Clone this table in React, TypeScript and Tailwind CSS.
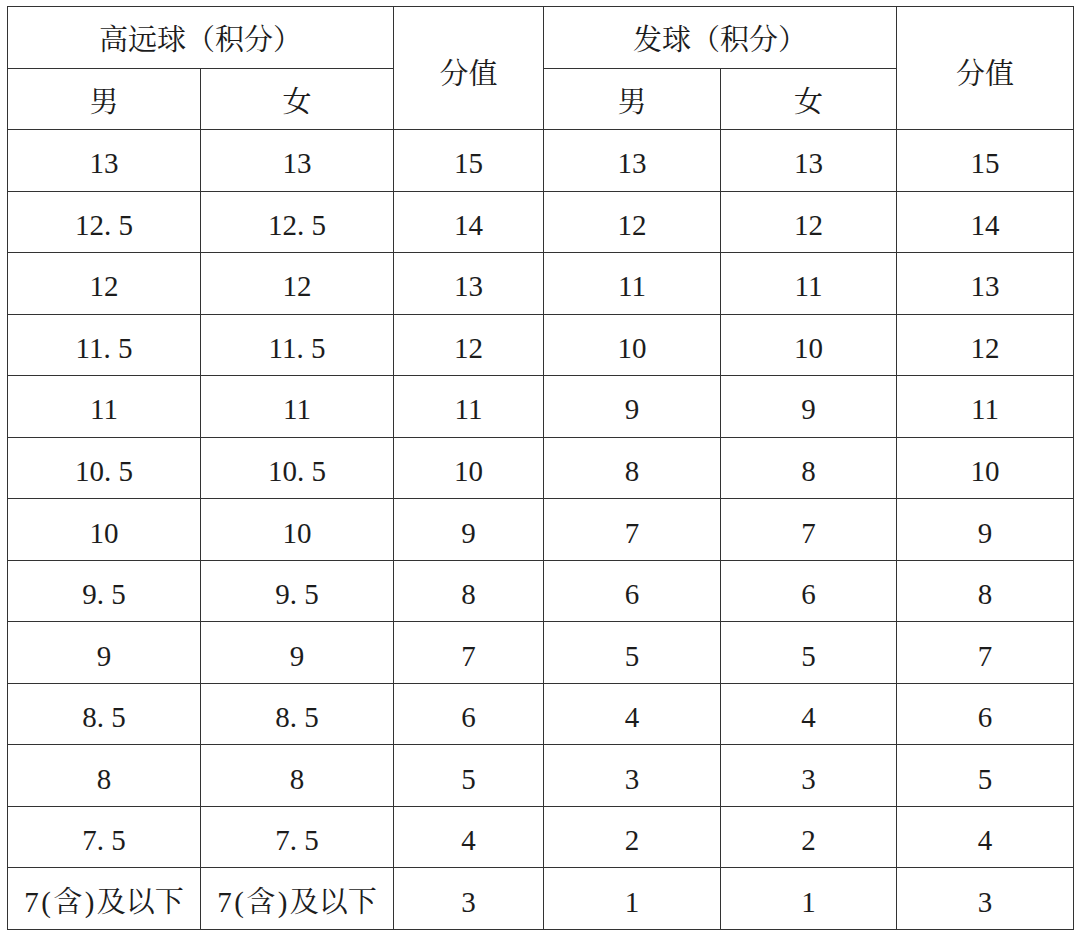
import React from "react";

const rows: [string, string, string, string, string, string][] = [
  ["13", "13", "15", "13", "13", "15"],
  ["12.5", "12.5", "14", "12", "12", "14"],
  ["12", "12", "13", "11", "11", "13"],
  ["11.5", "11.5", "12", "10", "10", "12"],
  ["11", "11", "11", "9", "9", "11"],
  ["10.5", "10.5", "10", "8", "8", "10"],
  ["10", "10", "9", "7", "7", "9"],
  ["9.5", "9.5", "8", "6", "6", "8"],
  ["9", "9", "7", "5", "5", "7"],
  ["8.5", "8.5", "6", "4", "4", "6"],
  ["8", "8", "5", "3", "3", "5"],
  ["7.5", "7.5", "4", "2", "2", "4"],
  ["7(含)及以下", "7(含)及以下", "3", "1", "1", "3"],
];

function Val({ v }: { v: string }) {
  if (v.includes("(")) {
    return (
      <>
        7<span className="inline-block w-[0.5em] text-center">(</span>
        <span className="text-[29px]">含</span>
        <span className="inline-block w-[0.5em] text-center">)</span>
        <span className="text-[29px]">及以下</span>
      </>
    );
  }
  const i = v.indexOf(".");
  if (i < 0) return <>{v}</>;
  return (
    <>
      {v.slice(0, i)}
      <span className="inline-block w-[0.5em] text-left">.</span>
      {v.slice(i + 1)}
    </>
  );
}

const cell = "border-[1.5px] border-[#333] text-center align-middle p-0 pt-[7px]";
const cjk = "text-[29px]";

export default function App() {
  return (
    <div className="bg-white w-[1080px] h-[937px] pt-[6px] pl-[7px]">
      <table
        className="table-fixed border-collapse w-[1066px] h-[924px] text-[#1c1c1c] text-[29px] leading-none"
        style={{ fontFamily: '"Liberation Serif", "Noto Serif CJK SC", "Noto Sans CJK SC", serif' }}
      >
        <colgroup>
          <col className="w-[193px]" />
          <col className="w-[193px]" />
          <col className="w-[150px]" />
          <col className="w-[177px]" />
          <col className="w-[176px]" />
          <col className="w-[177px]" />
        </colgroup>
        <tbody>
          <tr className="h-[61.5px]">
            <td colSpan={2} className={cell + " " + cjk}>高远球（积分）</td>
            <td rowSpan={2} className={cell + " " + cjk + " pt-[12px]"}>分值</td>
            <td colSpan={2} className={cell + " " + cjk}>发球（积分）</td>
            <td rowSpan={2} className={cell + " " + cjk + " pt-[12px]"}>分值</td>
          </tr>
          <tr className="h-[61.5px]">
            <td className={cell + " " + cjk}>男</td>
            <td className={cell + " " + cjk}>女</td>
            <td className={cell + " " + cjk}>男</td>
            <td className={cell + " " + cjk}>女</td>
          </tr>
          {rows.map((r, idx) => (
            <tr key={idx} className="h-[61.5px]">
              {r.map((v, j) => (
                <td key={j} className={cell}>
                  <Val v={v} />
                </td>
              ))}
            </tr>
          ))}
        </tbody>
      </table>
    </div>
  );
}
